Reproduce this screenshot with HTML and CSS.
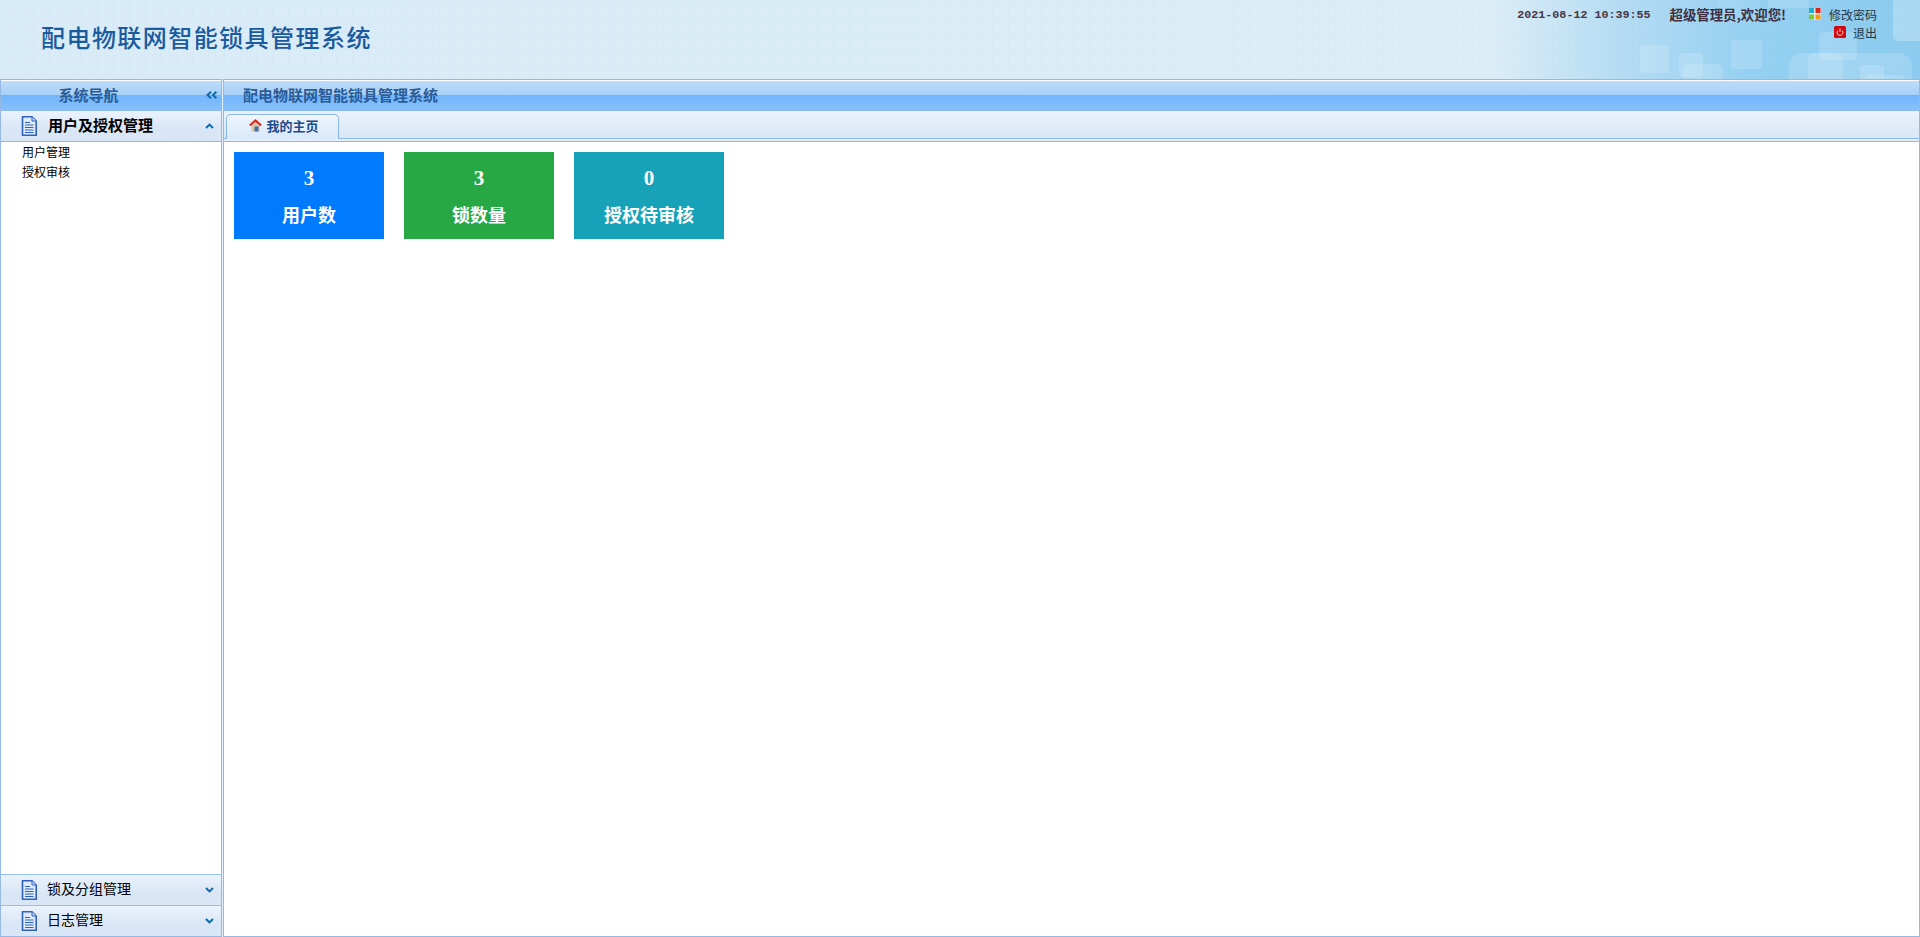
FILE: index.html
```html
<!DOCTYPE html>
<html lang="zh-CN">
<head>
<meta charset="utf-8">
<title>配电物联网智能锁具管理系统</title>
<link rel="stylesheet" href="styles.css">
</head>
<body>
<svg class="defs" width="0" height="0" aria-hidden="true">
  <symbol id="doc" viewBox="0 0 16 20">
    <path d="M1.5 .8H11L15.2 5V19.2H1.5Z" fill="#dfeafa" stroke="#2f62bd" stroke-width="1.6"/>
    <path d="M11 .8V5H15.2" fill="#c5d8f2" stroke="#2f62bd"/>
    <path d="M4 6.5H9M4 9H12.5M4 11.5H12.5M4 14H12.5M4 16.5H12.5" stroke="#2f62bd" stroke-width="1.2"/>
  </symbol>
  <symbol id="up" viewBox="0 0 9 6"><path d="M1 5L4.5 1.6L8 5" fill="none" stroke="#0e6aa8" stroke-width="2"/></symbol>
  <symbol id="down" viewBox="0 0 9 6"><path d="M1 1L4.5 4.4L8 1" fill="none" stroke="#0e6aa8" stroke-width="2"/></symbol>
</svg>

<header class="top">
  <svg class="top-deco" width="1920" height="79" aria-hidden="true">
    <defs>
      <pattern id="grid" width="16" height="16" patternUnits="userSpaceOnUse">
        <path d="M16 0H0V16" fill="none" stroke="#7fa8c8" stroke-opacity=".08"/>
      </pattern>
    </defs>
    <rect width="1920" height="79" fill="url(#grid)"/>
    <g fill="#fff" fill-opacity=".15">
      <rect x="1640" y="45" width="29" height="28" rx="3"/>
      <rect x="1679" y="53" width="24" height="24" rx="3"/>
      <rect x="1683" y="64" width="40" height="30" rx="6"/>
      <rect x="1731" y="40" width="31" height="29" rx="3"/>
      <rect x="1789" y="53" width="123" height="50" rx="14"/>
      <rect x="1808" y="53" width="35" height="40" rx="6"/>
      <rect x="1819" y="32" width="38" height="28" rx="4"/>
      <rect x="1860" y="65" width="24" height="30" rx="3"/>
      <rect x="1864" y="75" width="41" height="20" rx="5"/>
      <rect x="1893" y="-10" width="40" height="51" rx="5" fill-opacity=".25"/>
      <rect x="1768" y="-10" width="41" height="18" rx="3"/>
      <rect x="1717" y="-10" width="43" height="33" rx="5" fill-opacity=".08"/>
    </g>
  </svg>
  <h1 class="brand">配电物联网智能锁具管理系统</h1>
  <div class="userbar">
    <div class="userline">
      <span class="clock">2021-08-12 10:39:55</span>
      <span class="welcome">超级管理员,欢迎您!</span>
      <svg class="ico-apps" width="12" height="12" viewBox="0 0 12 12" aria-hidden="true">
        <rect width="12" height="12" fill="#dfe8ee"/>
        <rect x="0" y="0" width="5" height="5" fill="#1fb0d0"/>
        <rect x="6.5" y="0" width="5" height="5" fill="#e0201a"/>
        <rect x="0" y="6.5" width="5" height="5" fill="#7ac82e"/>
        <rect x="6.5" y="6.5" width="5" height="5" fill="#f39a12"/>
      </svg>
      <a class="toplink">修改密码</a>
    </div>
    <div class="userline">
      <svg width="12" height="12" viewBox="0 0 12 12" aria-hidden="true">
        <rect width="12" height="12" rx="1.5" fill="#d2090f"/>
        <path d="M3.6 4.6A3 3 0 1 0 8.4 4.6M6 2.4V6" fill="none" stroke="#f6d0d0" stroke-width="1"/>
      </svg>
      <a class="toplink exit">退出</a>
    </div>
  </div>
</header>

<div class="workspace">
  <aside class="sidebar">
    <div class="panel-title sidebar-title">
      <span class="panel-text">系统导航</span>
      <svg class="collapse" width="12" height="8" viewBox="0 0 12 8" aria-hidden="true">
        <path d="M5 .8L1.6 4L5 7.2M10.4 .8L7 4L10.4 7.2" fill="none" stroke="#0e6aa8" stroke-width="2"/>
      </svg>
    </div>
    <section class="acc-head">
      <svg class="doc" width="16" height="20" aria-hidden="true"><use href="#doc"/></svg>
      <span class="acc-name active">用户及授权管理</span>
      <svg class="chev" width="9" height="6" aria-hidden="true"><use href="#up"/></svg>
    </section>
    <ul class="menu">
      <li>用户管理</li>
      <li>授权审核</li>
    </ul>
    <section class="acc-head acc-line">
      <svg class="doc" width="16" height="20" aria-hidden="true"><use href="#doc"/></svg>
      <span class="acc-name">锁及分组管理</span>
      <svg class="chev" width="9" height="6" aria-hidden="true"><use href="#down"/></svg>
    </section>
    <section class="acc-head acc-line">
      <svg class="doc" width="16" height="20" aria-hidden="true"><use href="#doc"/></svg>
      <span class="acc-name">日志管理</span>
      <svg class="chev" width="9" height="6" aria-hidden="true"><use href="#down"/></svg>
    </section>
  </aside>

  <main class="main">
    <div class="panel-title main-title"><span class="panel-text">配电物联网智能锁具管理系统</span></div>
    <div class="tabbar">
      <div class="tab">
        <svg width="13" height="13" viewBox="0 0 13 13" aria-hidden="true">
          <path d="M2.5 6V12.5H10.5V6L6.5 2.5Z" fill="#d8c8a8"/>
          <rect x="5.5" y="7.5" width="4" height="5" fill="#3f6fa8"/>
          <path d="M.8 6.6L6.5 1.4L12.2 6.6" fill="none" stroke="#d6281e" stroke-width="2"/>
        </svg>
        <span>我的主页</span>
      </div>
    </div>
    <div class="content">
      <div class="stat stat-blue"><div class="num">3</div><div>用户数</div></div>
      <div class="stat stat-green"><div class="num">3</div><div>锁数量</div></div>
      <div class="stat stat-teal"><div class="num">0</div><div>授权待审核</div></div>
    </div>
  </main>
</div>
</body>
</html>
```

FILE: styles.css
```css
* { box-sizing: border-box; }
html, body { margin: 0; height: 937px; overflow: hidden; }
body {
  display: flex;
  flex-direction: column;
  font-family: "Liberation Serif", "Noto Sans CJK SC", serif;
  font-size: 12px;
  color: #000;
  background: #fff;
}
.defs { position: absolute; }

/* header */
.top {
  position: relative;
  flex: 0 0 79px;
  display: flex;
  justify-content: space-between;
  background: linear-gradient(90deg, #d9ebf6 0, #dcedf7 1490px, #b5dcf3 1620px, #95d0f1 1750px, #8ccbef 1920px);
  overflow: hidden;
}
.top-deco { position: absolute; left: 0; top: 0; }
.brand {
  position: relative;
  margin: 19px 0 0 41px;
  font-size: 24px;
  line-height: 36px;
  height: 36px;
  font-weight: 500;
  letter-spacing: 1.45px;
  color: #1a5aa0;
  font-family: "Noto Sans CJK SC", sans-serif;
}
.userbar {
  position: relative;
  padding: 5px 43px 0 0;
  display: flex;
  flex-direction: column;
  align-items: flex-end;
  font-family: "Noto Sans CJK SC", sans-serif;
  color: #2c2c2c;
}
.userline { display: flex; align-items: center; height: 18px; }
.clock {
  padding-top: 2px;
  font-family: "Liberation Mono", monospace;
  font-weight: 700;
  font-size: 11.7px;
  color: #4a3640;
}
.welcome { margin-left: 19px; font-size: 13.4px; font-weight: 700; color: #3e3040; }
.ico-apps { margin-left: 23px; }
.toplink { margin-left: 8px; font-size: 12px; color: #23384a; }
.toplink.exit { margin-left: 7px; }

/* panels */
.workspace { flex: 1; display: flex; gap: 1px; min-height: 0; background: #e4effb; }
.sidebar {
  flex: 0 0 222px;
  display: flex;
  flex-direction: column;
  border: 1px solid #95b8e7;
  background: #fff;
}
.main {
  flex: 1;
  display: flex;
  flex-direction: column;
  border: 1px solid #95b8e7;
  min-width: 0;
  background: #e4effb;
}
.panel-title {
  flex: 0 0 31px;
  display: flex;
  align-items: center;
  padding-bottom: 3px;
  border-top: 1px solid #fff;
  border-bottom: 1px solid #8ab8e8;
  background: linear-gradient(180deg, #bcdcfa 0, #a9d0f6 14px, #70b6fd 14px, #88c0fb 29px);
}
.panel-text {
  font-family: "Noto Sans CJK SC", sans-serif;
  font-size: 15px;
  font-weight: 700;
  color: #2a5c98;
}
.sidebar-title { position: relative; justify-content: center; padding-right: 45px; }
.collapse { position: absolute; right: 3px; top: 10px; }
.main-title { padding-left: 19px; }

/* accordion */
.acc-head {
  flex: 0 0 31px;
  display: flex;
  align-items: center;
  padding: 0 7px 0 20px;
  border-bottom: 1px solid #8ab8e8;
  background: linear-gradient(180deg, #ebf3fc 0, #d9e6f6 60%, #d9e6f6 100%);
  font-family: "Noto Sans CJK SC", sans-serif;
}
.acc-line { border-top: 1px solid #95c0ee; border-bottom: 0; }
.doc { flex: none; }
.acc-name { flex: 1; margin: 0 0 5px 10px; font-size: 14px; color: #000; }
.acc-name.active { margin: 0 0 3px 11px; font-weight: 700; font-size: 15px; }
.chev { flex: none; }
.menu {
  flex: 1;
  margin: 0;
  padding: 0 0 0 21px;
  list-style: none;
  font-family: "Noto Sans CJK SC", sans-serif;
}
.menu li { height: 20px; line-height: 20px; }

/* tabs */
.tabbar {
  flex: 0 0 28px;
  display: flex;
  align-items: flex-end;
  padding: 0 0 0 2px;
  border-bottom: 1px solid #8ab8e8;
  background: linear-gradient(180deg, #e8f1fb 0, #dae7f6 100%);
}
.tab {
  width: 113px;
  height: 25px;
  margin-bottom: -1px;
  padding: 0 0 3px 3px;
  display: flex;
  align-items: center;
  justify-content: center;
  gap: 4px;
  border: 1px solid #8ab8e8;
  border-bottom: 0;
  border-radius: 5px 5px 0 0;
  background: linear-gradient(180deg, #eff5fd 0, #d8e9fb 100%);
  font-family: "Noto Sans CJK SC", sans-serif;
  font-size: 13px;
  font-weight: 700;
  color: #1c4a8a;
}

/* stats */
.content {
  flex: 1;
  display: flex;
  align-items: flex-start;
  gap: 20px;
  margin-top: 2px;
  padding: 10px;
  border-top: 1px solid #8ab8e8;
  background: #fff;
}
.stat {
  width: 150px;
  height: 87px;
  padding-top: 11px;
  text-align: center;
  color: #fff;
  font-size: 18px;
  font-weight: 700;
  font-family: "Liberation Serif", "Noto Sans CJK SC", serif;
}
.stat div { height: 38px; line-height: 30px; }
.stat .num { font-size: 21px; line-height: 30px; }
.stat-blue { background: #007bff; }
.stat-green { background: #28a745; }
.stat-teal { background: #17a2b8; }
```
